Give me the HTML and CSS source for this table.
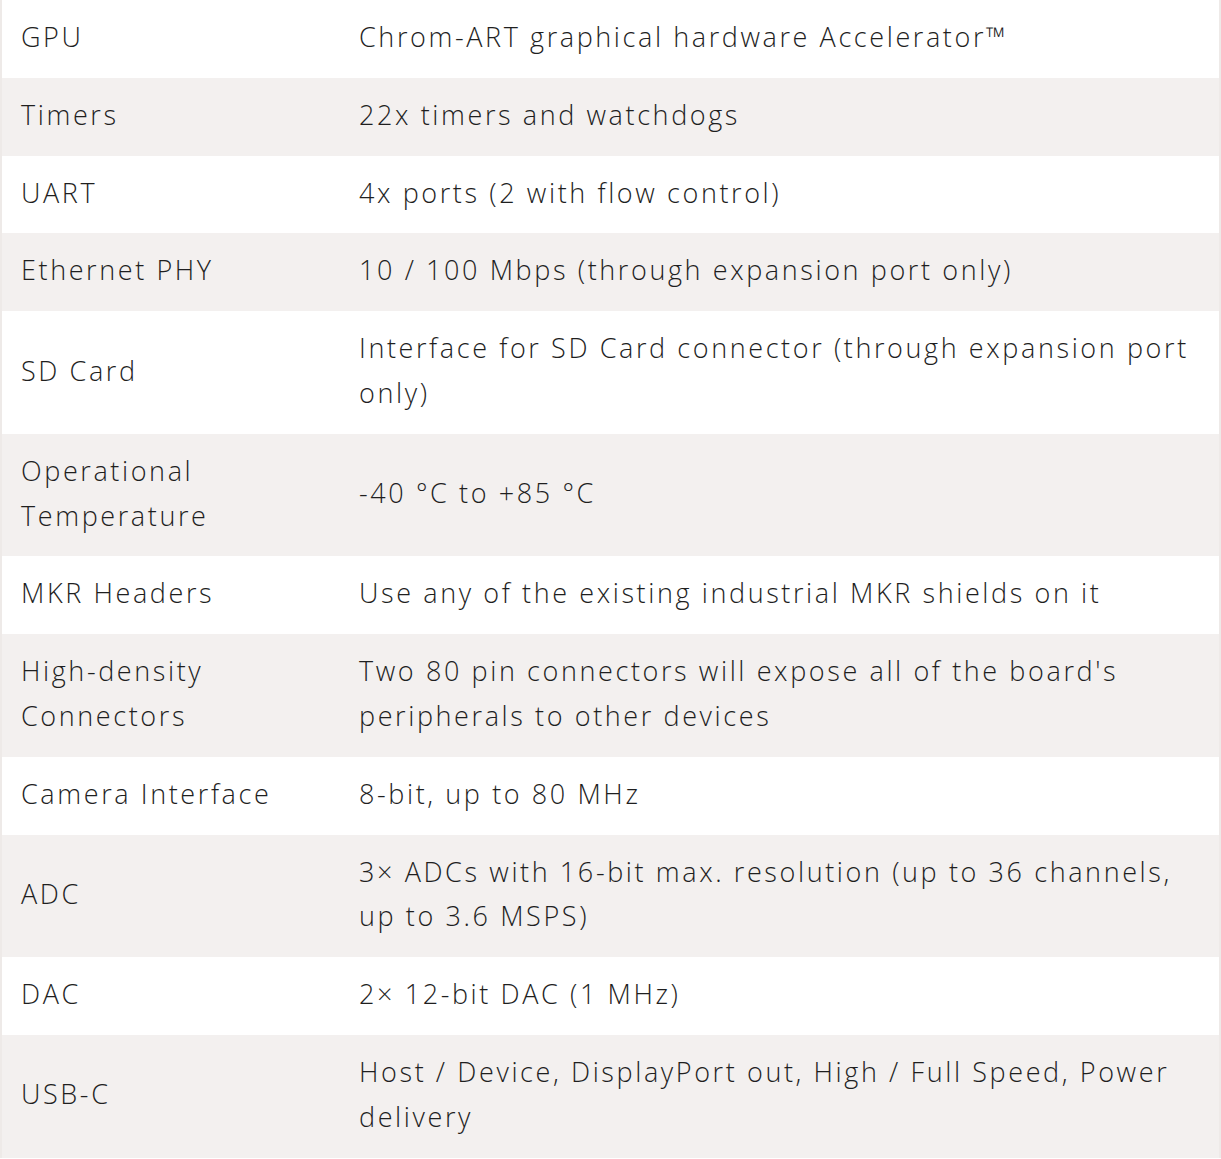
FILE: index.html
```html
<!DOCTYPE html>
<html lang="en">
<head>
<meta charset="utf-8">
<title>Tech specs</title>
<link rel="stylesheet" href="styles.css">
</head>
<body>
<table class="specs">
  <tbody>
    <tr><td class="key">GPU</td><td class="val">Chrom-ART graphical hardware Accelerator™</td></tr>
    <tr><td class="key">Timers</td><td class="val">22x timers and watchdogs</td></tr>
    <tr><td class="key">UART</td><td class="val">4x ports (2 with flow control)</td></tr>
    <tr><td class="key">Ethernet PHY</td><td class="val">10 / 100 Mbps (through expansion port only)</td></tr>
    <tr><td class="key">SD Card</td><td class="val">Interface for SD Card connector (through expansion port only)</td></tr>
    <tr><td class="key">Operational Temperature</td><td class="val">-40 °C to +85 °C</td></tr>
    <tr><td class="key">MKR Headers</td><td class="val">Use any of the existing industrial MKR shields on it</td></tr>
    <tr><td class="key">High-density Connectors</td><td class="val">Two 80 pin connectors will expose all of the board's peripherals to other devices</td></tr>
    <tr><td class="key">Camera Interface</td><td class="val">8-bit, up to 80 MHz</td></tr>
    <tr><td class="key">ADC</td><td class="val">3× ADCs with 16-bit max. resolution (up to 36 channels, up to 3.6 MSPS)</td></tr>
    <tr><td class="key">DAC</td><td class="val">2× 12-bit DAC (1 MHz)</td></tr>
    <tr><td class="key">USB-C</td><td class="val">Host / Device, DisplayPort out, High / Full Speed, Power delivery</td></tr>
  </tbody>
</table>
</body>
</html>
```

FILE: styles.css
```css
html, body {
  margin: 0;
  padding: 0;
  background: #ffffff;
}

.specs {
  width: 1221px;
  border-collapse: collapse;
  table-layout: fixed;
  border-left: 2px solid #eeeae8;
  border-right: 2px solid #eeeae8;
  font-family: "Open Sans", "Lato", sans-serif;
  font-weight: 300;
  font-size: 27px;
  line-height: 44.8px;
  letter-spacing: 2.6px;
  color: #1f1f1f;
}

.specs tr:nth-child(even) {
  background: #f3f0ef;
}

.specs td {
  padding: 15px 19px 18px;
  vertical-align: middle;
  text-align: left;
}

.specs .key {
  width: 300px;
}
```
